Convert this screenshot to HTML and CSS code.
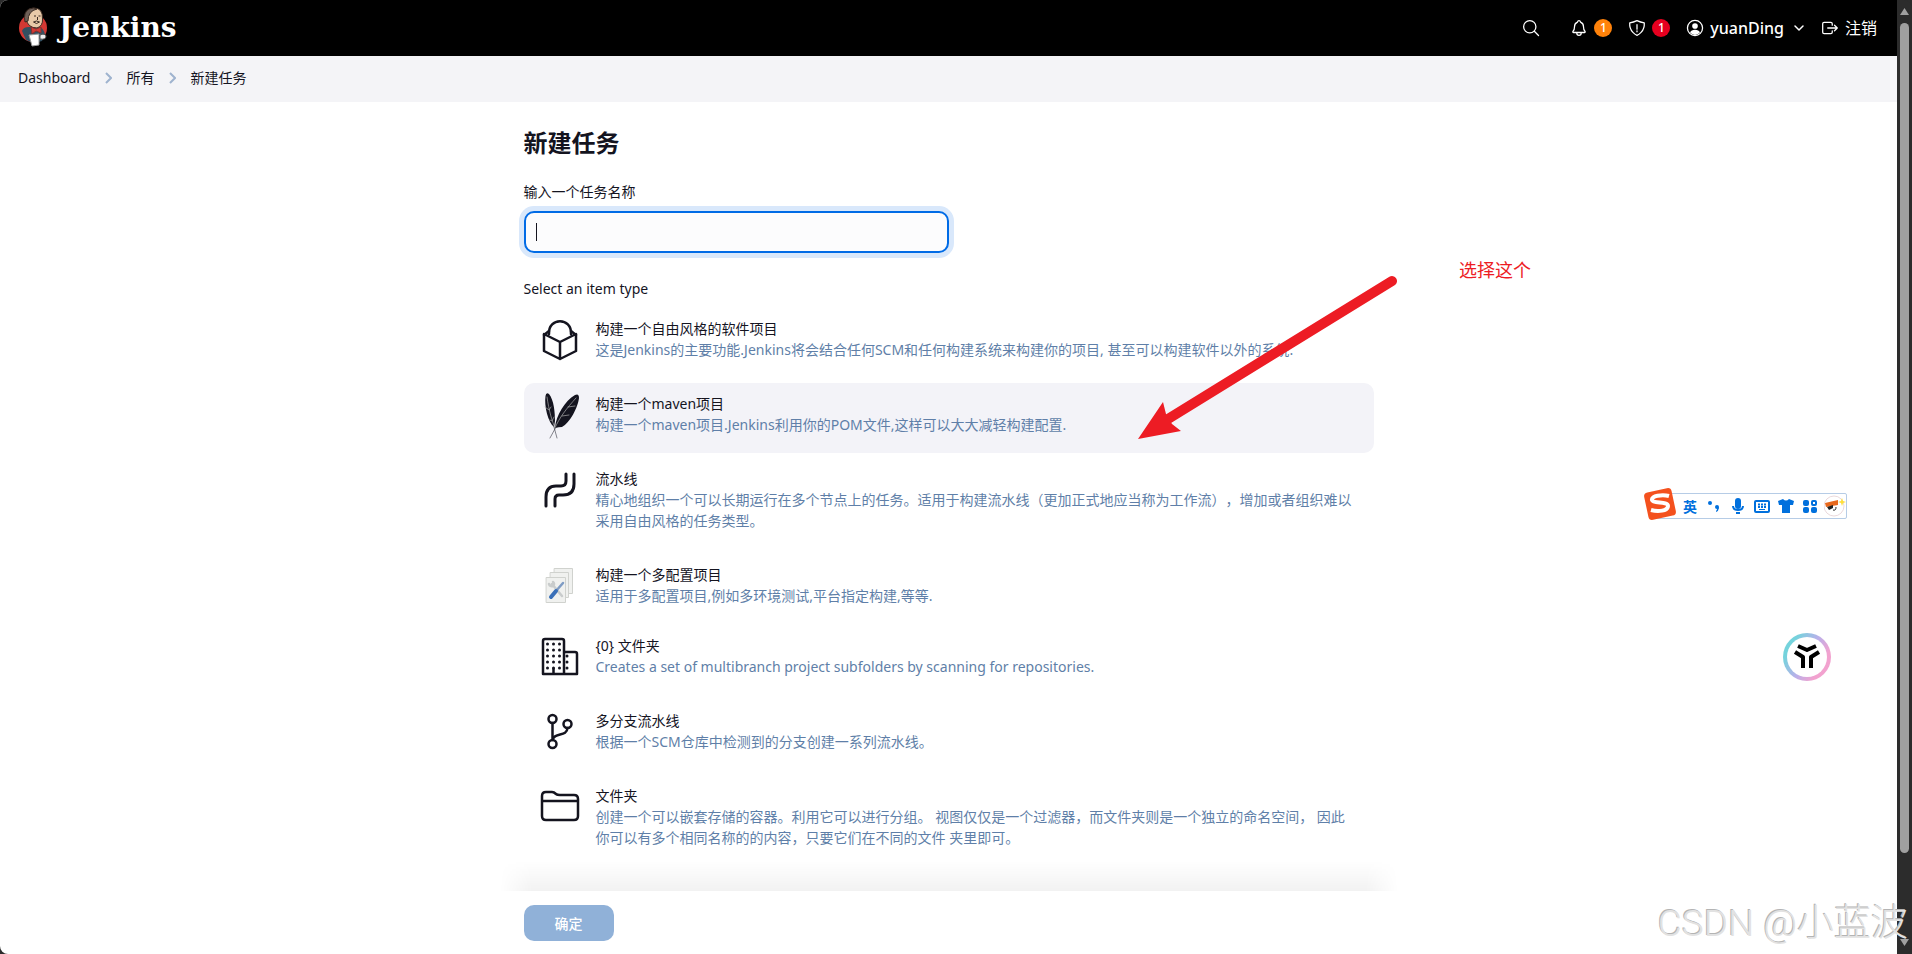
FILE: index.html
```html
<!DOCTYPE html>
<html lang="zh-CN">
<head>
    <meta charset="UTF-8">
    <meta name="viewport" content="width=device-width, initial-scale=1.0">
    <title>新建任务 [Jenkins]</title>
    <link rel="stylesheet" href="styles.css">
</head>
<body>

<div class="window">
    <div class="page">
        <header class="page-header">
            <a class="brand" href="#">
                <svg class="brand-icon" viewBox="0 0 28 40" aria-hidden="true">
                    <circle cx="14" cy="21" r="14" fill="#d33833"/>
                    <path d="M3 24 Q4 20 10 20 L19 19 Q25 21 26 28 L23 34 Q14 37 7 33 Z" fill="#335061"/>
                    <path d="M7 12 Q6 1 15 1 Q24 1 23.500 12 Q24 19 18 21 Q9 21 7 12 Z" fill="#e8c9a8" stroke="#3a2a22" stroke-width="1"/>
                    <path d="M6 15 Q4 5 10 2 Q15 0 18 2 Q9 4 9 14 Z" fill="#6d5f57" stroke="#3a2a22" stroke-width="1"/>
                    <path d="M15 9 h2 M19.500 9 h2 M18.500 10 v3 M14.500 15 q3 -2 6 0 q-3 3 -6 0" fill="none" stroke="#3a2a22" stroke-width="1"/>
                    <path d="M12 20 l5 2 5-2 v6 l-5-2 -4 3 Z" fill="#d33833" stroke="#81302e" stroke-width="1"/>
                    <path d="M10 28 L20 27 L20 38 L13 39 Z" fill="#fff" stroke="#999" stroke-width="1"/>
                    <path d="M21 28 q5 -2 6 1 q0 4 -6 3 Z" fill="#eee" stroke="#555" stroke-width="1"/>
                </svg>
                <span>Jenkins</span>
            </a>
            <div class="header-tools">
                <button class="tool tool-search" type="button" aria-label="Search">
                    <svg viewBox="0 0 512 512"><circle cx="221" cy="221" r="175"/><path d="M350 350 L470 470"/></svg>
                </button>
                <button class="tool" type="button" aria-label="Notifications">
                    <svg viewBox="0 0 512 512"><path d="M427.680 351.430C402 320 383.870 304 383.870 217.350 383.870 138 343.350 109.730 310 96c-4.430-1.820-8.600-6-9.950-10.550C294.200 65.540 277.800 48 256 48s-38.210 17.550-44 37.470c-1.350 4.600-5.520 8.710-9.950 10.530-33.390 13.750-73.870 41.920-73.870 121.350C128.130 304 110 320 84.320 351.430 73.680 364.450 83 384 101.610 384h308.880c18.510 0 27.770-19.610 17.190-32.570zM320 384v16a64 64 0 01-128 0v-16"/></svg>
                    <span class="badge badge-orange">1</span>
                </button>
                <button class="tool" type="button" aria-label="Security">
                    <svg viewBox="0 0 512 512"><path d="M463.100 112.370C373.680 96.330 336.710 84.450 256 48c-80.710 36.450-117.680 48.330-207.100 64.370C32.700 369.130 240.580 457.790 256 464c15.420-6.210 223.300-94.870 207.100-351.630zM256 160v130M256 335v30"/></svg>
                    <span class="badge badge-red">1</span>
                </button>
                <a class="tool tool-user" href="#">
                    <svg viewBox="0 0 512 512"><circle cx="256" cy="256" r="215"/><circle class="solid" cx="256" cy="200" r="80"/><path class="solid" d="M115 385 Q150 305 256 305 T397 385 Q340 455 256 455 T115 385z"/></svg>
                    <span>yuanDing</span>
                    <svg class="chevron" viewBox="0 0 12 12"><path d="M2 4 L6 8 L10 4"/></svg>
                </a>
                <a class="tool tool-logout" href="#">
                    <svg viewBox="0 0 512 512"><path d="M320 176v-40a40 40 0 00-40-40H88a40 40 0 00-40 40v240a40 40 0 0040 40h192a40 40 0 0040-40v-40M384 176l80 80-80 80M191 256h273"/></svg>
                    <span>注销</span>
                </a>
            </div>
        </header>

        <nav class="breadcrumbs">
            <a href="#">Dashboard</a>
            <svg viewBox="0 0 8 12" aria-hidden="true"><path d="M2 1 L7 6 L2 11"/></svg>
            <a href="#">所有</a>
            <svg viewBox="0 0 8 12" aria-hidden="true"><path d="M2 1 L7 6 L2 11"/></svg>
            <a href="#">新建任务</a>
        </nav>

        <form class="new-item">
            <h1>新建任务</h1>
            <label class="field-label" for="name">输入一个任务名称</label>
            <input class="name-input" id="name" type="text" autocomplete="off">
            <p class="field-label type-label">Select an item type</p>

            <ul class="items">
                <li class="item">
                    <svg class="item-icon" viewBox="0 0 48 46">
                        <path d="M24 41 L8 33 V16 L24 24 L40 16 V33 Z M24 24 V41 M13 16 C12 -1 36 -1 35 16"/>
                        <path d="M8 17 L13 13 M40 17 L35 13"/>
                    </svg>
                    <div class="item-text">
                        <h2>构建一个自由风格的软件项目</h2>
                        <p>这是Jenkins的主要功能.Jenkins将会结合任何SCM和任何构建系统来构建你的项目, 甚至可以构建软件以外的系统.</p>
                    </div>
                </li>
                <li class="item active">
                    <svg class="item-icon" viewBox="0 0 48 46">
                        <path class="feather" d="M18 34 C12 29 8 13 9.500 3 Q10 -1 13 1 C18 7 19 20 19 28 L18 34 Z"/>
                        <path class="feather" d="M19 35 C20 22 29 8 39 2 Q43 0 43 5 C42 14 34 30 26 34 Q23 34 19 35 Z"/>
                        <path class="vein" d="M11 4 C13 18 16 28 19 35 M40 5 C31 15 23 25 19 35"/>
                        <path class="vein" d="M9 14 l4 3 2-3 M14 27 l2 1 2-4 M32 14 l7-1 M26 23 l7-1"/>
                        <path class="quill" d="M18 34 L21 45 M20 34 L14 45"/>
                    </svg>
                    <div class="item-text">
                        <h2>构建一个maven项目</h2>
                        <p>构建一个maven项目.Jenkins利用你的POM文件,这样可以大大减轻构建配置.</p>
                    </div>
                </li>
                <li class="item">
                    <svg class="item-icon bold" viewBox="0 0 48 46">
                        <path d="M10 38 V29 Q10 18 20 18 H25 Q30 18 30 13 V6 M19 38 V31 Q19 27 23 27 H27 Q38 27 38 16 V6"/>
                    </svg>
                    <div class="item-text">
                        <h2>流水线</h2>
                        <p>精心地组织一个可以长期运行在多个节点上的任务。适用于构建流水线（更加正式地应当称为工作流），增加或者组织难以采用自由风格的任务类型。</p>
                    </div>
                </li>
                <li class="item compact">
                    <svg class="item-icon" viewBox="0 0 48 46">
                        <g class="sheet">
                            <path d="M18.500 4.500 h18 v25 h-18 Z"/>
                            <path d="M14.500 8.500 h18 v25 h-18 Z"/>
                            <path d="M10.500 13.500 h19 v25 h-19 Z"/>
                        </g>
                        <path class="wrench" d="M16 20 L26 32 M13 20 q1 3 4 2 q2-2 0-4"/>
                        <path class="driver-rod" d="M27 19 L20 27"/>
                        <path class="driver" d="M20 27 L15 33"/>
                    </svg>
                    <div class="item-text">
                        <h2>构建一个多配置项目</h2>
                        <p>适用于多配置项目,例如多环境测试,平台指定构建,等等.</p>
                    </div>
                </li>
                <li class="item">
                    <svg class="item-icon" viewBox="0 0 48 46">
                        <path d="M28 39 V6 Q28 4 26 4 H9 Q7 4 7 6 V39 H41 V19 Q41 17 39 17 H28 M17.500 39 V34"/>
                        <path class="dots" d="M11.500 9 H24 M11.500 15 H24 M11.500 21 H24 M11.500 27 H24 M11.500 33 H24"/>
                        <path class="dots" d="M31 21 H37 M31 27 H37 M31 33 H37"/>
                    </svg>
                    <div class="item-text">
                        <h2>{0} 文件夹</h2>
                        <p>Creates a set of multibranch project subfolders by scanning for repositories.</p>
                    </div>
                </li>
                <li class="item">
                    <svg class="item-icon" viewBox="0 0 48 46">
                        <circle cx="16.500" cy="9" r="4"/><circle cx="31.500" cy="14" r="4"/><circle cx="16.500" cy="34" r="4"/>
                        <path d="M16.500 13 V30 M31.500 18 C31 27 19 22 17 29"/>
                    </svg>
                    <div class="item-text">
                        <h2>多分支流水线</h2>
                        <p>根据一个SCM仓库中检测到的分支创建一系列流水线。</p>
                    </div>
                </li>
                <li class="item">
                    <svg class="item-icon" viewBox="0 0 48 46">
                        <path d="M6 16 V11 Q6 7 10 7 H16 Q18 7 20 9 Q21 10 24 10 H38 Q42 10 42 14 V31 Q42 35 38 35 H10 Q6 35 6 31 V16 H42"/>
                    </svg>
                    <div class="item-text">
                        <h2>文件夹</h2>
                        <p>创建一个可以嵌套存储的容器。利用它可以进行分组。 视图仅仅是一个过滤器，而文件夹则是一个独立的命名空间， 因此你可以有多个相同名称的的内容，只要它们在不同的文件 夹里即可。</p>
                    </div>
                </li>
            </ul>

            <div class="form-footer">
                <button class="submit" type="button">确定</button>
            </div>
        </form>
    </div>

    <div class="scrollbar" aria-hidden="true">
        <svg viewBox="0 0 9 7"><path d="M4.500 0 L9 7 H0 Z"/></svg>
        <div class="thumb"></div>
        <svg viewBox="0 0 9 7"><path d="M0 0 H9 L4.500 7 Z"/></svg>
    </div>
</div>

<!-- notes and floating tools over the page -->
<svg class="arrow" viewBox="0 0 260 168" aria-hidden="true">
    <path d="M254 5 L30 143"/>
    <path class="arrow-head" d="M0 163 L25 126 L28 138 L34 148 L43 155 Z"/>
</svg>
<div class="note">选择这个</div>

<div class="ime-bar">
    <svg class="ime-logo" viewBox="0 0 32 32" aria-hidden="true">
        <rect x="2" y="2" width="28" height="28" rx="4" transform="rotate(-12 16 16)" fill="#f4511e"/>
        <path d="M25 8 C18 6 7 8 8 12 C9 16 24 13 24 18 C24 23 14 24 7 22" fill="none" stroke="#fff" stroke-width="4"/>
    </svg>
    <span class="ime-lang">英</span>
    <svg viewBox="0 0 16 16"><circle cx="4" cy="5" r="2"/><path d="M9 9 a2 2 0 1 1 4 0 q0 4 -3 5 v-1 q1 -1 1 -2 q-2 0 -2 -2"/></svg>
    <svg viewBox="0 0 16 16"><rect x="5" y="0" width="6" height="11" rx="3"/><path class="line" d="M3 8 q0 4 5 4 t5 -4 M6 15 h4"/></svg>
    <svg viewBox="0 0 16 16"><rect class="line" x="1" y="3" width="14" height="11" rx="1"/><path class="keys" d="M4 6.500 h9 M4 9 h9"/><path class="line-thin" d="M5 11.500 h6"/></svg>
    <svg viewBox="0 0 16 16"><path d="M5 1 q3 3 6 0 l5 2 -1 4 -3 0 v8 h-8 v-8 l-3 0 -1 -4 Z"/></svg>
    <svg viewBox="0 0 16 16"><rect x="1" y="2" width="6" height="6" rx="2"/><rect x="1" y="9" width="6" height="6" rx="2"/><rect x="9" y="9" width="6" height="6" rx="2"/><rect class="line" x="10" y="3" width="4" height="4" rx="1"/></svg>
    <svg class="ime-face" viewBox="0 0 22 22" aria-hidden="true">
        <circle cx="10" cy="11" r="10" fill="#fff" stroke="#ead9dc"/>
        <path d="M1 8 L14 5 V10 L2 12 Z" fill="#e8681c"/>
        <path d="M3 12 l6 -2 v3 l-4 2 Z" fill="#222"/>
        <path d="M9 15 q3 1 3 -3" fill="none" stroke="#222"/>
        <path d="M18 3 l1 3 3 1 -3 1 -1 3 -1 -3 -3 -1 3 -1 Z" fill="#ffdf3a"/>
    </svg>
</div>

<button class="assistant" type="button" aria-label="Assistant">
    <svg viewBox="0 0 28 26"><path d="M5 2 L14 6 L23 2 M2 8 L10 13 V24 M26 8 L18 13 V24"/></svg>
</button>

<div class="watermark">CSDN @小蓝波</div>

</body>
</html>
```
FILE: styles.css
```css
* {
    box-sizing: border-box;
}
body {
    margin: 0;
    background-color: #2c2c2c;
    color: #14141f;
    font-family: "Noto Sans", "Noto Sans CJK SC", sans-serif;
    font-size: 14px;
    line-height: 21px;
    text-spacing-trim: space-all;
    overflow: hidden;
}
a {
    color: inherit;
    text-decoration: none;
}
button {
    font: inherit;
    border: 0;
    padding: 0;
    background: none;
    cursor: pointer;
}
.window {
    display: flex;
    height: 100vh;
    border-radius: 8px;
    overflow: hidden;
}
.page {
    flex: 1;
    min-width: 0;
    background-color: #fff;
    overflow: hidden;
}

/* header */
.page-header {
    display: flex;
    align-items: center;
    justify-content: space-between;
    height: 56px;
    padding: 0 20px 0 19px;
    background-color: #000;
    color: #fff;
}
.brand {
    display: flex;
    align-items: center;
    gap: 12px;
    padding-bottom: 2px;
    font-family: "DejaVu Serif", Georgia, serif;
    font-size: 28px;
    font-weight: bold;
}
.brand-icon {
    width: 28px;
    height: 40px;
}
.header-tools {
    display: flex;
    align-items: center;
    gap: 16px;
    font-size: 16px;
    font-weight: 500;
}
.tool {
    display: flex;
    align-items: center;
    gap: 6px;
    color: #fff;
}
.tool-search {
    margin-right: 14px;
}
.tool-logout {
    font-weight: normal;
}
.tool svg {
    width: 18px;
    height: 18px;
    fill: none;
    stroke: currentColor;
    stroke-width: 36px;
    stroke-linecap: round;
    stroke-linejoin: round;
}
.tool .solid {
    fill: currentColor;
    stroke: none;
}
.tool .chevron {
    width: 12px;
    height: 12px;
    margin-left: 3px;
    stroke-width: 1.5;
}
.badge {
    width: 18px;
    height: 18px;
    border-radius: 50%;
    font-size: 12px;
    line-height: 18px;
    text-align: center;
}
.badge-orange {
    background-color: #ff820a;
}
.badge-red {
    background-color: #e6001f;
}

/* breadcrumbs */
.breadcrumbs {
    display: flex;
    align-items: center;
    gap: 14px;
    height: 46px;
    padding: 0 18px 4px;
    background-color: #f4f4f7;
}
.breadcrumbs svg {
    width: 8px;
    height: 12px;
    margin-top: 2px;
    fill: none;
    stroke: #9fb3cf;
    stroke-width: 2px;
}

/* form */
.new-item {
    width: 850px;
    max-width: 100%;
    margin: 0 auto;
    padding-top: 25px;
}
.new-item h1 {
    margin: 0 0 22px;
    font-size: 24px;
    line-height: 32px;
    font-weight: bold;
}
.field-label {
    display: block;
    margin: 0 0 9px;
}
.name-input {
    display: block;
    width: 50%;
    height: 42px;
    padding: 0 10px;
    border: 2px solid #006be6;
    border-radius: 10px;
    outline: 0;
    background: linear-gradient(#14141f, #14141f) 10px center / 1px 18px no-repeat #fcfcfd;
    box-shadow: 0 0 0 5px #d9e8fb;
    font: inherit;
}
.type-label {
    margin: 25px 0 9px;
}
.items {
    display: flex;
    flex-direction: column;
    gap: 5px;
    margin: 0;
    padding: 0;
    list-style: none;
}
.item {
    display: flex;
    align-items: flex-start;
    gap: 12px;
    padding: 10px 16px 18px 12px;
    border-radius: 10px;
}
.item.compact {
    padding-bottom: 14px;
}
.item.active {
    background-color: #f3f3f8;
}
.item h2,
.item p {
    margin: 0;
    font-size: 14px;
    font-weight: normal;
}
.item p {
    color: #5f7fa8;
}
.item-icon {
    flex: none;
    width: 48px;
    height: 46px;
    margin-bottom: -4px;
    fill: none;
    stroke: #14141f;
    stroke-width: 2.5;
    stroke-linecap: round;
    stroke-linejoin: round;
    overflow: visible;
}
.item-icon.bold {
    stroke-width: 3;
}
.item-icon .feather {
    fill: #14141f;
    stroke: none;
}
.item-icon .vein {
    stroke: #aaa;
    stroke-width: 1px;
    opacity: 0.7;
}
.item-icon .quill {
    stroke-width: 1px;
    opacity: 0.5;
}
.item-icon .sheet {
    fill: #f0f1ef;
    stroke: #d0d2ce;
    stroke-width: 1px;
}
.item-icon .wrench {
    stroke: #c9cccc;
}
.item-icon .driver-rod {
    stroke: #7f9cc4;
}
.item-icon .driver {
    stroke: #3a70b8;
    stroke-width: 4px;
}
.item-icon .dots {
    stroke-width: 3px;
    stroke-dasharray: 0 6;
}

/* footer */
.form-footer {
    position: relative;
    margin-top: 25px;
    padding: 14px 0;
    background-color: #fff;
}
.form-footer::before {
    content: "";
    position: absolute;
    left: -24px;
    right: -24px;
    bottom: 100%;
    height: 30px;
    background: linear-gradient(transparent, rgba(0, 0, 0, 0.05));
    mask-image: linear-gradient(90deg, transparent, #000 32px, #000 calc(100% - 32px), transparent);
    pointer-events: none;
}
.submit {
    width: 90px;
    height: 36px;
    border-radius: 10px;
    background-color: #90b1d8;
    color: #fff;
    font-weight: 500;
}

/* scrollbar */
.scrollbar {
    display: flex;
    flex-direction: column;
    align-items: center;
    width: 15px;
    padding: 8px 0;
    background-color: #2c2c2c;
}
.scrollbar svg {
    width: 9px;
    height: 7px;
    fill: #a0a0a0;
}
.thumb {
    width: 9px;
    height: 87vh;
    margin: 8px 0 auto;
    border-radius: 5px;
    background-color: #a0a0a0;
}

/* things that float over the page */
.arrow {
    position: absolute;
    left: 1138px;
    top: 276px;
    width: 260px;
    height: 168px;
    fill: none;
    stroke: #ed1c24;
    stroke-width: 10px;
    stroke-linecap: round;
    overflow: visible;
    pointer-events: none;
}
.arrow .arrow-head {
    fill: #ed1c24;
    stroke: none;
}
.note {
    position: absolute;
    left: 1459px;
    top: 260px;
    color: #ed1c24;
    font-size: 18px;
}
.ime-bar {
    position: absolute;
    left: 1656px;
    top: 493px;
    display: flex;
    align-items: center;
    gap: 8px;
    height: 26px;
    padding: 0 0 0 25px;
    border: 1px solid #b6cce6;
    border-radius: 2px;
    background-color: #fff;
    color: #0070dd;
    font-weight: bold;
}
.ime-lang {
    width: 16px;
    text-align: center;
}
.ime-bar svg {
    width: 16px;
    height: 16px;
    fill: #0070dd;
}
.ime-bar .line,
.ime-bar .line-thin,
.ime-bar .keys {
    fill: none;
    stroke: #0070dd;
    stroke-width: 2px;
}
.ime-bar .keys {
    stroke-dasharray: 2 1;
}
.ime-bar .line-thin {
    stroke-width: 1px;
}
.ime-bar .ime-logo {
    position: absolute;
    left: -13px;
    top: -6px;
    width: 32px;
    height: 32px;
}
.ime-bar .ime-face {
    width: 22px;
    height: 22px;
    margin-left: -2px;
}
.assistant {
    position: absolute;
    left: 1783px;
    top: 633px;
    display: grid;
    place-items: center;
    width: 48px;
    height: 48px;
    border: 4px solid transparent;
    border-radius: 50%;
    background: linear-gradient(#fff, #fff) padding-box, linear-gradient(120deg, #74d3dc 20%, #b9b0ea 50%, #f2a2cf 75%) border-box;
}
.assistant svg {
    width: 28px;
    height: 26px;
    fill: none;
    stroke: #000;
    stroke-width: 4px;
    stroke-linejoin: round;
}
.watermark {
    position: absolute;
    right: 4px;
    bottom: 6px;
    color: #e2e2e2;
    font-family: Roboto, "Noto Sans CJK SC", sans-serif;
    font-size: 37px;
    font-weight: 300;
    line-height: 48px;
    text-shadow: -1px -1px 0 #b4b4b4;
}
```
